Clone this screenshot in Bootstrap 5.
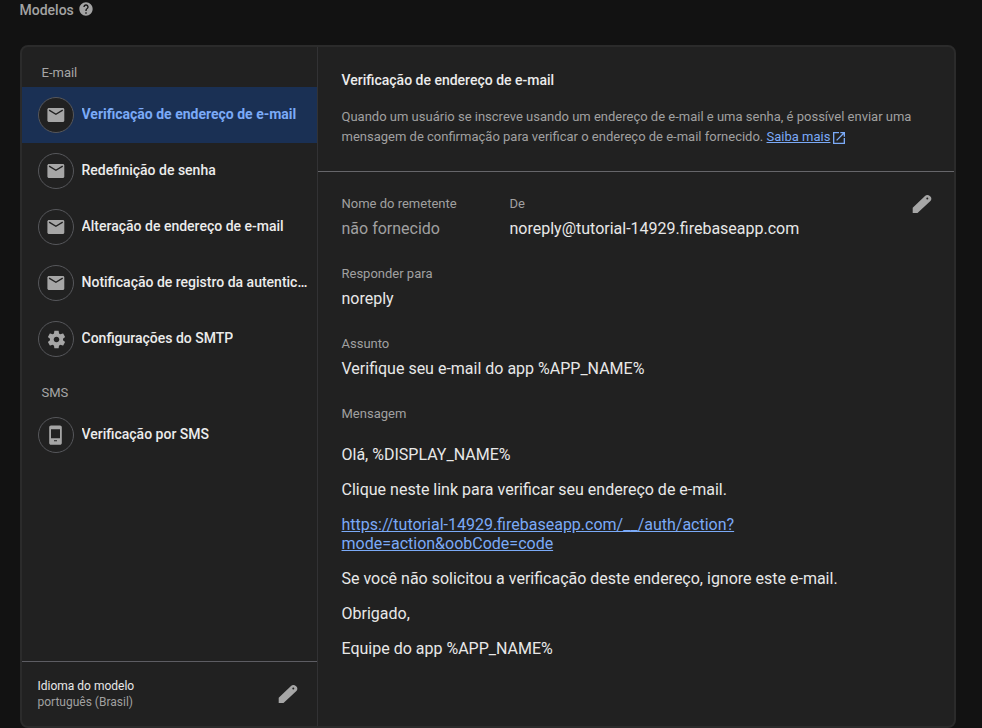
<!DOCTYPE html>
<html lang="pt-BR" data-bs-theme="dark">
<head>
<meta charset="utf-8">
<meta name="viewport" content="width=device-width, initial-scale=1">
<title>Modelos</title>
<link href="https://cdn.jsdelivr.net/npm/bootstrap@5.3.0/dist/css/bootstrap.min.css" rel="stylesheet">
<style>
  body { background: #121212; color: #e8e8e8; font-family: Roboto, sans-serif; font-size: 16px; height: 728px; overflow: hidden; }
  a { color: #7baaf7; }
  .page-title { font-size: 14px; font-weight: 500; line-height: 20px; color: #a3a3a3; height: 45px; padding-left: 19.5px; }
  .page-title svg { margin: 1px 0 0 4.5px; }
  .panel { width: 936px; height: 683px; margin-left: 20px; background: #212121; border: 2px solid #2b2b2b; border-radius: 8px; }
  .side { width: 296px; border-right: 1px solid #323234; }
  .side-label { height: 40px; padding: 16px 0 0 19.5px; font-size: 13px; line-height: 20px; color: #a6a6a6; }
  .side-item { height: 56px; padding: 0 8px 0 16px; gap: 7.5px; color: #ececec; font-size: 14px; font-weight: 500; text-decoration: none; }
  .side-item span { padding-bottom: 2px; }
  .side-item.selected { background: #1a3054; color: #7baaf7; font-weight: 700; }
  .side-item.selected:hover { color: #7baaf7; }
  .disc { width: 36px; height: 36px; border: 1px solid #56575b; background: #212121; color: #a6a6a6; }
  .side-foot { height: 65px; border-top: 1px solid #5d5d63; padding: 0 19px 0 15.5px; font-size: 12px; line-height: 16px; }
  .muted { color: #a0a0a0; }
  .intro { height: 125px; border-bottom: 1px solid #66666a; padding: 23px 24px 0 23.5px; font-size: 13px; line-height: 20px; color: #a0a0a0; }
  .intro h2 { font-size: 14px; font-weight: 500; line-height: 20px; margin-bottom: 17px; color: #ececec; }
  .ext svg { margin-left: 1px; }
  .details { padding: 22px 22px 0 23.5px; }
  .field { height: 70px; }
  .field-name { font-size: 13px; line-height: 20px; color: #a0a0a0; }
  .field-value { line-height: 20px; margin-top: 5px; }
  .sender { width: 168px; }
  .message { width: 500px; line-height: 19px; margin-top: 21px; }
  .message p { margin-bottom: 16px; }
  .pencil { color: #a6a6a6; }
</style>
</head>
<body>
<svg class="d-none" aria-hidden="true">
  <symbol id="mail" viewBox="0 0 20 20"><path fill="currentColor" d="M3 3h13.800c.9 0 1.500.7 1.500 1.500v11c0 .8-.6 1.500-1.500 1.500H3c-.9 0-1.600-.7-1.600-1.500v-11C1.400 3.700 2.100 3 3 3z"/><path fill="none" stroke="#212121" stroke-width="1.400" d="M3.100 5.100l6.800 4.200 6.800-4.200"/></symbol>
  <symbol id="pencil" viewBox="0 0 20 20"><path fill="currentColor" fill-rule="evenodd" d="M.7 19v-5.200L13 1.900c1.300-1.200 3.400-1.200 4.800 0l.6.6c1.300 1.300 1.300 3.200 0 4.500L5.500 19zM15.300 3.500a1 1 0 1 0 .01 2 1 1 0 1 0-.01-2z"/></symbol>
  <symbol id="gear" viewBox="0 0 24 24"><path fill="currentColor" d="M19.430 12.980c.04-.32.07-.64.07-.98s-.03-.66-.07-.98l2.110-1.650c.19-.15.24-.42.12-.64l-2-3.460c-.12-.22-.39-.3-.61-.22l-2.490 1c-.52-.4-1.080-.73-1.690-.98l-.38-2.650C14.460 2.180 14.250 2 14 2h-4c-.25 0-.46.18-.49.42l-.38 2.650c-.61.25-1.170.59-1.690.98l-2.490-1c-.23-.09-.49 0-.61.22l-2 3.460c-.13.22-.07.49.12.64l2.110 1.650c-.04.32-.07.65-.07.98s.03.66.07.98l-2.110 1.650c-.19.15-.24.42-.12.64l2 3.460c.12.22.39.3.61.22l2.490-1c.52.4 1.080.73 1.690.98l.38 2.650c.03.24.24.42.49.42h4c.25 0 .46-.18.49-.42l.38-2.650c.61-.25 1.170-.59 1.690-.98l2.490 1c.23.09.49 0 .61-.22l2-3.460c.12-.22.07-.49-.12-.64l-2.110-1.650zM12 15.200c-1.770 0-3.200-1.430-3.200-3.200s1.430-3.200 3.200-3.200 3.200 1.430 3.200 3.200-1.430 3.200-3.200 3.200z"/></symbol>
</svg>

<div class="page-title d-flex align-items-start">
  Modelos
  <svg width="16" height="16" viewBox="0 0 24 24"><path fill="currentColor" d="M12 2C6.480 2 2 6.480 2 12s4.480 10 10 10 10-4.480 10-10S17.520 2 12 2zm1 17h-2v-2h2v2zm2.070-7.750l-.9.920C13.450 12.900 13 13.500 13 15h-2v-.5c0-1.100.45-2.100 1.170-2.830l1.240-1.260c.37-.36.59-.86.59-1.410 0-1.100-.9-2-2-2s-2 .9-2 2H8c0-2.210 1.790-4 4-4s4 1.790 4 4c0 .88-.36 1.680-.93 2.250z"/></svg>
</div>

<main class="panel d-flex">
  <aside class="side d-flex flex-column flex-shrink-0">
    <div class="side-label">E-mail</div>
    <a href="#" class="side-item selected d-flex align-items-center"><div class="disc rounded-circle d-flex align-items-center justify-content-center flex-shrink-0"><svg width="20" height="20"><use href="#mail"/></svg></div><span class="text-truncate">Verificação de endereço de e-mail</span></a>
    <a href="#" class="side-item d-flex align-items-center"><div class="disc rounded-circle d-flex align-items-center justify-content-center flex-shrink-0"><svg width="20" height="20"><use href="#mail"/></svg></div><span class="text-truncate">Redefinição de senha</span></a>
    <a href="#" class="side-item d-flex align-items-center"><div class="disc rounded-circle d-flex align-items-center justify-content-center flex-shrink-0"><svg width="20" height="20"><use href="#mail"/></svg></div><span class="text-truncate">Alteração de endereço de e-mail</span></a>
    <a href="#" class="side-item d-flex align-items-center"><div class="disc rounded-circle d-flex align-items-center justify-content-center flex-shrink-0"><svg width="20" height="20"><use href="#mail"/></svg></div><span class="text-truncate">Notificação de registro da autentic...</span></a>
    <a href="#" class="side-item d-flex align-items-center"><div class="disc rounded-circle d-flex align-items-center justify-content-center flex-shrink-0"><svg width="21" height="21"><use href="#gear"/></svg></div><span class="text-truncate">Configurações do SMTP</span></a>
    <div class="side-label">SMS</div>
    <a href="#" class="side-item d-flex align-items-center"><div class="disc rounded-circle d-flex align-items-center justify-content-center flex-shrink-0"><svg width="20" height="20" viewBox="0 0 20 20"><path fill="currentColor" fill-rule="evenodd" d="M5 .4h9c1 0 1.800.8 1.800 1.800v15.800c0 1-.8 1.800-1.800 1.800H5c-1 0-1.800-.8-1.800-1.800V2.200C3.200 1.200 4 .4 5 .4zM5 4.200v9h9v-9zM8 15.300v1h3v-1z"/></svg></div><span class="text-truncate">Verificação por SMS</span></a>
    <div class="side-foot d-flex align-items-center justify-content-between mt-auto">
      <div><div>Idioma do modelo</div><div class="muted">português (Brasil)</div></div>
      <svg class="pencil" width="20" height="20"><use href="#pencil"/></svg>
    </div>
  </aside>

  <section class="flex-grow-1">
    <header class="intro">
      <h2>Verificação de endereço de e-mail</h2>
      Quando um usuário se inscreve usando um endereço de e-mail e uma senha, é possível enviar uma<br>mensagem de confirmação para verificar o endereço de e-mail fornecido. <a href="#">Saiba mais</a><a href="#" class="ext"><svg width="16" height="16" viewBox="0 0 24 24"><path fill="currentColor" d="M19 19H5V5h7V3H3v18h18v-9h-2v7zM14 3v2h3.590l-9.830 9.830 1.410 1.410L19 6.410V10h2V3h-7z"/></svg></a>
    </header>
    <div class="details">
      <div class="d-flex">
        <div class="field sender"><div class="field-name">Nome do remetente</div><div class="field-value muted">não fornecido</div></div>
        <div class="field"><div class="field-name">De</div><div class="field-value">noreply@tutorial-14929.firebaseapp.com</div></div>
        <svg class="pencil ms-auto" width="20" height="20"><use href="#pencil"/></svg>
      </div>
      <div class="field"><div class="field-name">Responder para</div><div class="field-value">noreply</div></div>
      <div class="field"><div class="field-name">Assunto</div><div class="field-value">Verifique seu e-mail do app %APP_NAME%</div></div>
      <div class="field-name">Mensagem</div>
      <div class="message">
        <p>Olá, %DISPLAY_NAME%</p>
        <p>Clique neste link para verificar seu endereço de e-mail.</p>
        <p><a href="#">https://tutorial-14929.firebaseapp.com/__/auth/action?<br>mode=action&amp;oobCode=code</a></p>
        <p>Se você não solicitou a verificação deste endereço, ignore este e-mail.</p>
        <p>Obrigado,</p>
        <p>Equipe do app %APP_NAME%</p>
      </div>
    </div>
  </section>
</main>
<script src="https://cdn.jsdelivr.net/npm/bootstrap@5.3.0/dist/js/bootstrap.bundle.min.js"></script>
</body>
</html>
